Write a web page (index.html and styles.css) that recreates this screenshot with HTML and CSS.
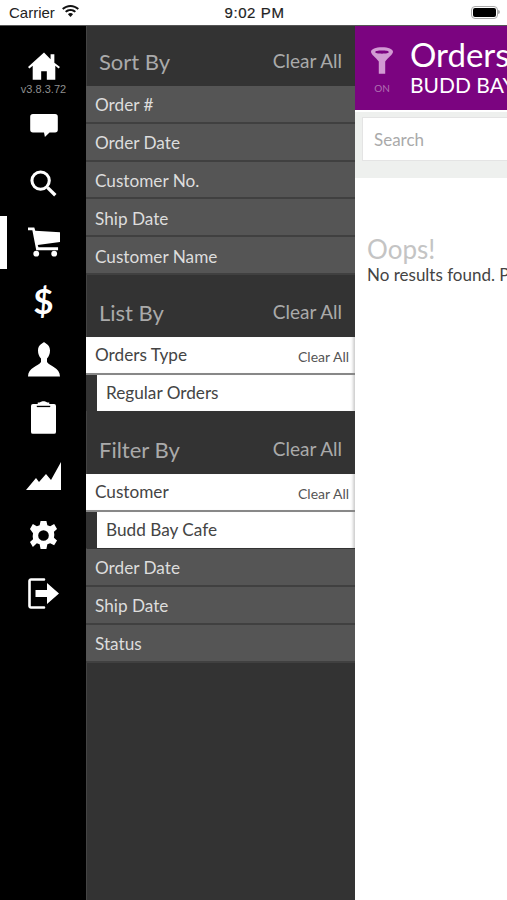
FILE: index.html
```html
<!DOCTYPE html>
<html lang="en">
<head>
<meta charset="utf-8">
<title>Orders</title>
<link rel="stylesheet" href="styles.css">
</head>
<body>
<div class="app">
  <header class="status">
    <div class="status-left">
      <span>Carrier</span>
      <svg class="wifi" viewBox="0 0 18 13"><path d="M9 2.600c2.600 0 5 1 6.800 2.700L17 4C14.900 2 12 .8 9 .8S3.100 2 1 4l1.200 1.300C4 3.600 6.400 2.600 9 2.600z"/><path d="M9 6.500c1.500 0 2.900.6 3.900 1.500l1.300-1.300C12.800 5.400 11 4.700 9 4.700s-3.800.7-5.200 2L5.100 8C6.100 7.100 7.500 6.500 9 6.500z"/><path d="M9 8.500c-1 0-1.800.4-2.400 1L9 12.200l2.400-2.700c-.6-.6-1.400-1-2.400-1z"/></svg>
    </div>
    <div class="status-time">9:02 PM</div>
    <div class="status-right">
      <span class="battery"><span class="battery-fill"></span></span><span class="battery-tip"></span>
    </div>
  </header>
  <div class="body">
    <nav class="rail">
      <div class="rail-item rail-home">
        <svg class="icon icon-home" viewBox="0 0 34 30"><path d="M17 0 0 15.500l1.500 1.700L5 14.300V29h9v-9h6v9h9V14.300l3.500 2.900 1.500-1.700L28 11V2h-4v5.200z"/></svg>
        <span class="version">v3.8.3.72</span>
      </div>
      <div class="rail-item">
        <svg class="icon icon-chat" viewBox="0 0 30 25"><path d="M3 0h24a3 3 0 0 1 3 3v14a3 3 0 0 1-3 3h-6l-5 5-1-5H3a3 3 0 0 1-3-3V3a3 3 0 0 1 3-3z"/></svg>
      </div>
      <div class="rail-item">
        <svg class="icon icon-search" viewBox="0 0 28 28"><circle cx="11" cy="11" r="9" fill="none" stroke="#fff" stroke-width="3.200"/><path d="M17 19.500l2.500-2.500 8 8-2.500 2.500z"/></svg>
      </div>
      <div class="rail-item rail-active">
        <svg class="icon icon-cart" viewBox="0 0 33 30"><path d="M0 0h6.500l1 3.500L33 5v10L10 18l.8 2.500H31v3H8.500L4.500 3H0z"/><circle cx="8.500" cy="27" r="3"/><circle cx="27" cy="27" r="3"/></svg>
      </div>
      <div class="rail-item">
        <span class="dollar">$</span>
      </div>
      <div class="rail-item">
        <svg class="icon icon-person" viewBox="0 0 32 35"><path d="M16 0c-1 1.500-6 2.500-6 8.500 0 3.500 1.200 6 3 8V20C10.500 24 0 25.500 0 34.500h32C32 25.500 21.500 24 19 20v-3.500c1.800-2 3-4.500 3-8 0-6-5-7-6-8.500z"/></svg>
      </div>
      <div class="rail-item">
        <svg class="icon icon-clip" viewBox="0 0 26 34"><path d="M2 3h5V1.500C10 1.500 10 0 13 0s3 1.500 6 1.500V3h5a2 2 0 0 1 2 2v27a2 2 0 0 1-2 2H2a2 2 0 0 1-2-2V5a2 2 0 0 1 2-2z"/><path d="M6 5.500h14" stroke="#000" stroke-width="1.400"/></svg>
      </div>
      <div class="rail-item">
        <svg class="icon icon-chart" viewBox="0 0 35 28"><path d="M0 28 10 16l3 4 7-8 5 6 10-18v28z"/></svg>
      </div>
      <div class="rail-item">
        <svg class="icon icon-gear" viewBox="0 0 30 30"><path fill-rule="evenodd" d="M12 0h6l1 4.300 2.900 1.200L26 3.200l3 5-3.200 3 .4 3-.4 3 3.200 3-3 5-4.100-2.300-2.900 1.200-1 4.900h-6l-1-4.900-2.900-1.200L4 26.800l-3-5 3.200-3-.4-3 .4-3L1 8.200l3-5 4.100 2.300L11 4.300zM15 9.500a5.500 5.500 0 1 0 0 11 5.500 5.500 0 0 0 0-11z"/></svg>
      </div>
      <div class="rail-item">
        <svg class="icon icon-logout" viewBox="0 0 31 31"><path d="M16 1.500H3A1.500 1.500 0 0 0 1.500 3v25A1.500 1.500 0 0 0 3 29.500h13" fill="none" stroke="#fff" stroke-width="2.600" stroke-linecap="round"/><path d="M7.500 12H19V5l12 10.500L19 26v-7H7.500z"/></svg>
      </div>
    </nav>
    <aside class="panel">
      <section class="group group-sort">
        <div class="group-head"><span class="group-title">Sort By</span><span class="group-clear">Clear All</span></div>
        <div class="row">Order #</div>
        <div class="row">Order Date</div>
        <div class="row">Customer No.</div>
        <div class="row">Ship Date</div>
        <div class="row">Customer Name</div>
      </section>
      <section class="group group-list">
        <div class="group-head"><span class="group-title">List By</span><span class="group-clear">Clear All</span></div>
        <div class="row row-open"><span>Orders Type</span><span class="row-clear">Clear All</span></div>
        <div class="row-sub"><div class="row-value">Regular Orders</div></div>
      </section>
      <section class="group group-filter">
        <div class="group-head"><span class="group-title">Filter By</span><span class="group-clear">Clear All</span></div>
        <div class="row row-open"><span>Customer</span><span class="row-clear">Clear All</span></div>
        <div class="row-sub"><div class="row-value">Budd Bay Cafe</div></div>
        <div class="row">Order Date</div>
        <div class="row">Ship Date</div>
        <div class="row">Status</div>
      </section>
    </aside>
    <main class="main">
      <div class="main-head">
        <div class="filter">
          <svg class="funnel" viewBox="0 0 24 29"><path fill-rule="evenodd" d="M12 0C5 0 0 2 0 5c0 3 5 6 8.500 10.500V29h7V15.500C19 11 24 8 24 5c0-3-5-5-12-5zm0 3.500c4.500 0 7.500.6 7.500 1.700S16.500 7 12 7 4.500 6.300 4.500 5.200 7.500 3.500 12 3.500z"/></svg>
          <span class="filter-on">ON</span>
        </div>
        <div class="titles">
          <div class="title">Orders</div>
          <div class="subtitle">BUDD BAY CAFE</div>
        </div>
      </div>
      <div class="search-band">
        <div class="search">Search</div>
      </div>
      <div class="empty">
        <div class="oops">Oops!</div>
        <div class="empty-text">No results found. Please try again.</div>
      </div>
    </main>
  </div>
</div>
</body>
</html>
```

FILE: styles.css
```css
* { box-sizing: border-box; }
html, body { margin: 0; padding: 0; }
body { width: 507px; height: 900px; overflow: hidden; background: #fff; font-family: Lato, "Open Sans", sans-serif; }
.app { width: 507px; height: 900px; display: flex; flex-direction: column; overflow: hidden; }

.status { height: 26px; flex: none; display: grid; grid-template-columns: 1fr auto 1fr; align-items: center; padding: 2px 7px 3px 9px; background: #fff; border-bottom: 1px solid #555; font-family: "Liberation Sans", sans-serif; font-size: 15px; color: #222; }
.status-left { display: flex; align-items: center; gap: 6px; }
.wifi { width: 19px; height: 14px; fill: #111; margin-top: -3px; }
.status-time { letter-spacing: .6px; -webkit-text-stroke: .2px #222; }
.status-right { display: flex; align-items: center; justify-content: flex-end; }
.battery { width: 27px; height: 13px; border: 1px solid #aaa; border-radius: 4px; padding: 1px; display: block; }
.battery-fill { display: block; height: 100%; background: #000; border-radius: 2px; }
.battery-tip { width: 2px; height: 4px; background: #aaa; border-radius: 0 2px 2px 0; }

.body { flex: 1; display: flex; min-height: 0; }

.rail { width: 86px; flex: none; background: #000; padding-top: 11px; display: flex; flex-direction: column; }
.rail-item { position: relative; height: 58.600px; flex: none; display: flex; flex-direction: column; align-items: center; justify-content: center; padding-left: 1px; }
.icon { fill: #fff; flex: none; }
.icon-home { width: 32px; height: 29px; }
.icon-chat { width: 28px; height: 23px; margin-top: 1px; }
.icon-search { width: 27px; height: 27px; }
.icon-cart { width: 32px; height: 30px; }
.icon-person { width: 32px; height: 35px; }
.icon-clip { width: 25px; height: 35px; }
.icon-chart { width: 35px; height: 28px; }
.icon-gear { width: 29px; height: 29px; }
.icon-logout { width: 31px; height: 31px; }
.rail-home { justify-content: flex-start; padding-top: 15px; }
.version { font-size: 11px; line-height: 12px; color: #8f8f8f; margin-top: 2px; font-family: "Liberation Sans", sans-serif; }
.rail-active::before { content: ""; position: absolute; left: 0; top: 3px; width: 7px; height: 53px; background: #fff; }
.dollar { color: #fff; font-family: Lato, sans-serif; font-weight: 700; font-size: 35px; line-height: 1; }

.panel { width: 269px; flex: none; background: #333; box-shadow: inset 1px 0 0 #444; }
.group-head { display: flex; justify-content: space-between; align-items: center; padding: 0 13px; }
.group-sort .group-head { height: 60px; padding-top: 10px; }
.group-list .group-head { height: 62px; padding-top: 14px; }
.group-filter .group-head { height: 63px; padding-top: 15px; }
.group-title { font-size: 22px; color: #aaa; }
.group-clear { font-size: 19px; color: #aaa; margin-top: -2px; }
.group-sort .row { height: 37.800px; }
.row { height: 38px; display: flex; align-items: center; justify-content: space-between; padding: 2px 6px 0 9px; font-size: 17.200px; color: #ddd; background: #555; border-bottom: 2px solid #404040; }
.row-open { padding-top: 0; background: #fff; color: #444; border-bottom: 2px solid #888; box-shadow: inset -4px 0 3px -2px #ccc; }
.row-clear { font-size: 14px; color: #555; margin-top: 3px; }
.row-sub { padding-left: 11px; height: 36px; background: #333; }
.row-value { height: 36px; background: #fff; color: #444; font-size: 17.200px; line-height: 36px; padding-left: 9px; box-shadow: inset -4px 0 3px -2px #ccc; }
.row-sub + .row { margin-top: 1px; }

.main { width: 300px; flex: none; background: #fff; }
.main-head { height: 84px; background: #7b0480; display: flex; padding: 0 0 0 16px; }
.filter { width: 22px; flex: none; display: flex; flex-direction: column; align-items: center; padding-top: 21px; }
.funnel { width: 22px; height: 27px; fill: #d29ad3; flex: none; }
.filter-on { font-size: 10px; color: #b06fb2; margin-top: 8px; }
.titles { padding: 10px 0 0 17px; color: #fff; white-space: nowrap; }
.title { font-size: 33px; line-height: 36px; }
.subtitle { font-size: 21px; line-height: 26px; }
.search-band { height: 68px; background: #eef0ee; padding: 7px 0 17px 7px; box-shadow: inset 0 2px 0 #fff; }
.search { height: 44px; background: #fff; border: 1px solid #e4e4e4; color: #aaa; font-size: 17px; line-height: 44px; padding-left: 11px; }
.empty { padding: 56px 0 0 12px; white-space: nowrap; }
.oops { font-size: 26px; line-height: 30px; color: #c4c4c4; }
.empty-text { font-size: 17px; line-height: 22px; color: #444; }
```
